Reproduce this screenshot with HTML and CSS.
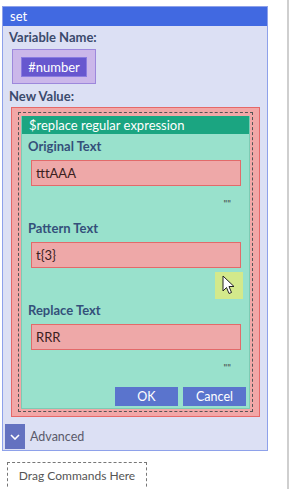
FILE: index.html
```html
<!DOCTYPE html>
<html lang="en">
<head>
  <meta charset="UTF-8">
  <title>set</title>
  <link rel="stylesheet" href="styles.css">
</head>
<body>
  <div class="page">
    <div class="command">
      <div class="command-title">set</div>
      <div class="command-body">
        <div class="label">Variable Name:</div>
        <div class="var-box"><span class="var-chip">#number</span></div>
        <div class="label">New Value:</div>
        <div class="value-box">
          <div class="dotted">
            <div class="dialog">
              <div class="dialog-title">$replace regular expression</div>
              <div class="dialog-body">
                <div class="field-label">Original Text</div>
                <div class="field">tttAAA</div>
                <div class="quotes">""</div>
                <div class="field-label">Pattern Text</div>
                <div class="field">t{3}</div>
                <div class="quotes"><span class="hover">
                  <svg width="14" height="20" viewBox="0 0 14 20"><path d="M1 1 L1 16 L4.5 12.5 L7 18.5 L9.5 17.5 L7 11.5 L12 11.5 Z" fill="#fff" stroke="#222" stroke-width="1"/></svg>
                </span></div>
                <div class="field-label">Replace Text</div>
                <div class="field">RRR</div>
                <div class="quotes">""</div>
                <div class="buttons">
                  <button class="btn">OK</button>
                  <button class="btn">Cancel</button>
                </div>
              </div>
            </div>
          </div>
        </div>
      </div>
      <div class="advanced">
        <span class="chevron"><svg width="10" height="6" viewBox="0 0 10 6"><path d="M1 1 L5 5 L9 1" fill="none" stroke="#fff" stroke-width="1.6"/></svg></span>
        <span>Advanced</span>
      </div>
    </div>
    <div class="drop">Drag Commands Here</div>
  </div>
</body>
</html>
```
FILE: styles.css
```css
body {
  margin: 0;
  background: #fff;
  font-family: Lato, "Noto Sans", sans-serif;
  font-size: 12px;
}
.page {
  width: 289px;
  height: 489px;
  border-right: 2px solid #cfcfcf;
  padding-top: 6px;
  box-sizing: border-box;
  overflow: hidden;
}
.command {
  margin-left: 2px;
  width: 266px;
  background: #dce0f4;
  border: 1px solid #8ea1ea;
  box-sizing: border-box;
}
.command-title {
  background: #4169e1;
  color: #fff;
  height: 19px;
  line-height: 18px;
  padding-left: 7px;
  font-size: 13px;
}
.command-body {
  padding: 3px 8px 0 6px;
}
.label {
  font-weight: bold;
  font-size: 13px;
  color: #3b4a6c;
  line-height: 16px;
}
.var-box {
  margin: 4px 0 4px 3px;
  width: 84px;
  height: 35px;
  background: #cbb7ea;
  border: 1px solid #9d88dc;
  box-sizing: border-box;
  display: flex;
  align-items: center;
  justify-content: center;
}
.var-chip {
  width: 66px;
  height: 20px;
  background: #6757cf;
  border: 1px solid #8a7ce0;
  box-sizing: border-box;
  color: #fff;
  text-align: center;
  line-height: 18px;
  font-size: 13px;
}
.value-box {
  margin: 3px 0 0 2px;
  width: 249px;
  background: #f2a7a7;
  border: 1px solid #e66868;
  box-sizing: border-box;
  padding: 4px 6px 4px 6px;
}
.dotted {
  border: 1px dashed #555;
  padding: 3px 2px 2px 2px;
}
.dialog {
  background: #99e1cc;
  border: 1px solid #7ccbb4;
  border-top: none;
}
.dialog-title {
  background: #1ba581;
  color: #fff;
  height: 18px;
  line-height: 18px;
  padding-left: 7px;
  font-size: 13px;
}
.dialog-body {
  padding: 4px 3px 2px 6px;
}
.field-label {
  font-weight: bold;
  font-size: 13px;
  color: #34507a;
  line-height: 16px;
}
.field {
  margin: 6px 5px 0 3px;
  height: 26px;
  background: #eea8a8;
  border: 1px solid #e26a6a;
  box-sizing: border-box;
  line-height: 24px;
  padding-left: 4px;
  color: #3a2020;
  font-size: 13px;
}
.quotes {
  height: 34px;
  display: flex;
  justify-content: flex-end;
  align-items: center;
  padding-right: 15px;
  color: #444;
  font-size: 10px;
}
.hover {
  width: 28px;
  height: 27px;
  background: #d3e98b;
  display: flex;
  align-items: center;
  justify-content: center;
  margin-right: -12px;
}
.buttons {
  display: flex;
  justify-content: flex-end;
  gap: 5px;
  margin-top: 3px;
}
.btn {
  background: #5a74cd;
  color: #fff;
  border: none;
  height: 19px;
  width: 63px;
  font-family: inherit;
  font-size: 12.5px;
  padding: 0;
}
.advanced {
  display: flex;
  align-items: center;
  gap: 5px;
  margin-top: 7px;
  padding: 0 0 1px 2px;
  color: #5a5a6a;
  font-size: 12.5px;
}
.chevron {
  width: 20px;
  height: 25px;
  background: #6472c0;
  display: flex;
  align-items: center;
  justify-content: center;
}
.drop {
  margin: 11px 0 0 7px;
  width: 140px;
  height: 30px;
  border: 1px dashed #777;
  box-sizing: border-box;
  text-align: center;
  line-height: 26px;
  color: #555;
  font-size: 12px;
}
```
